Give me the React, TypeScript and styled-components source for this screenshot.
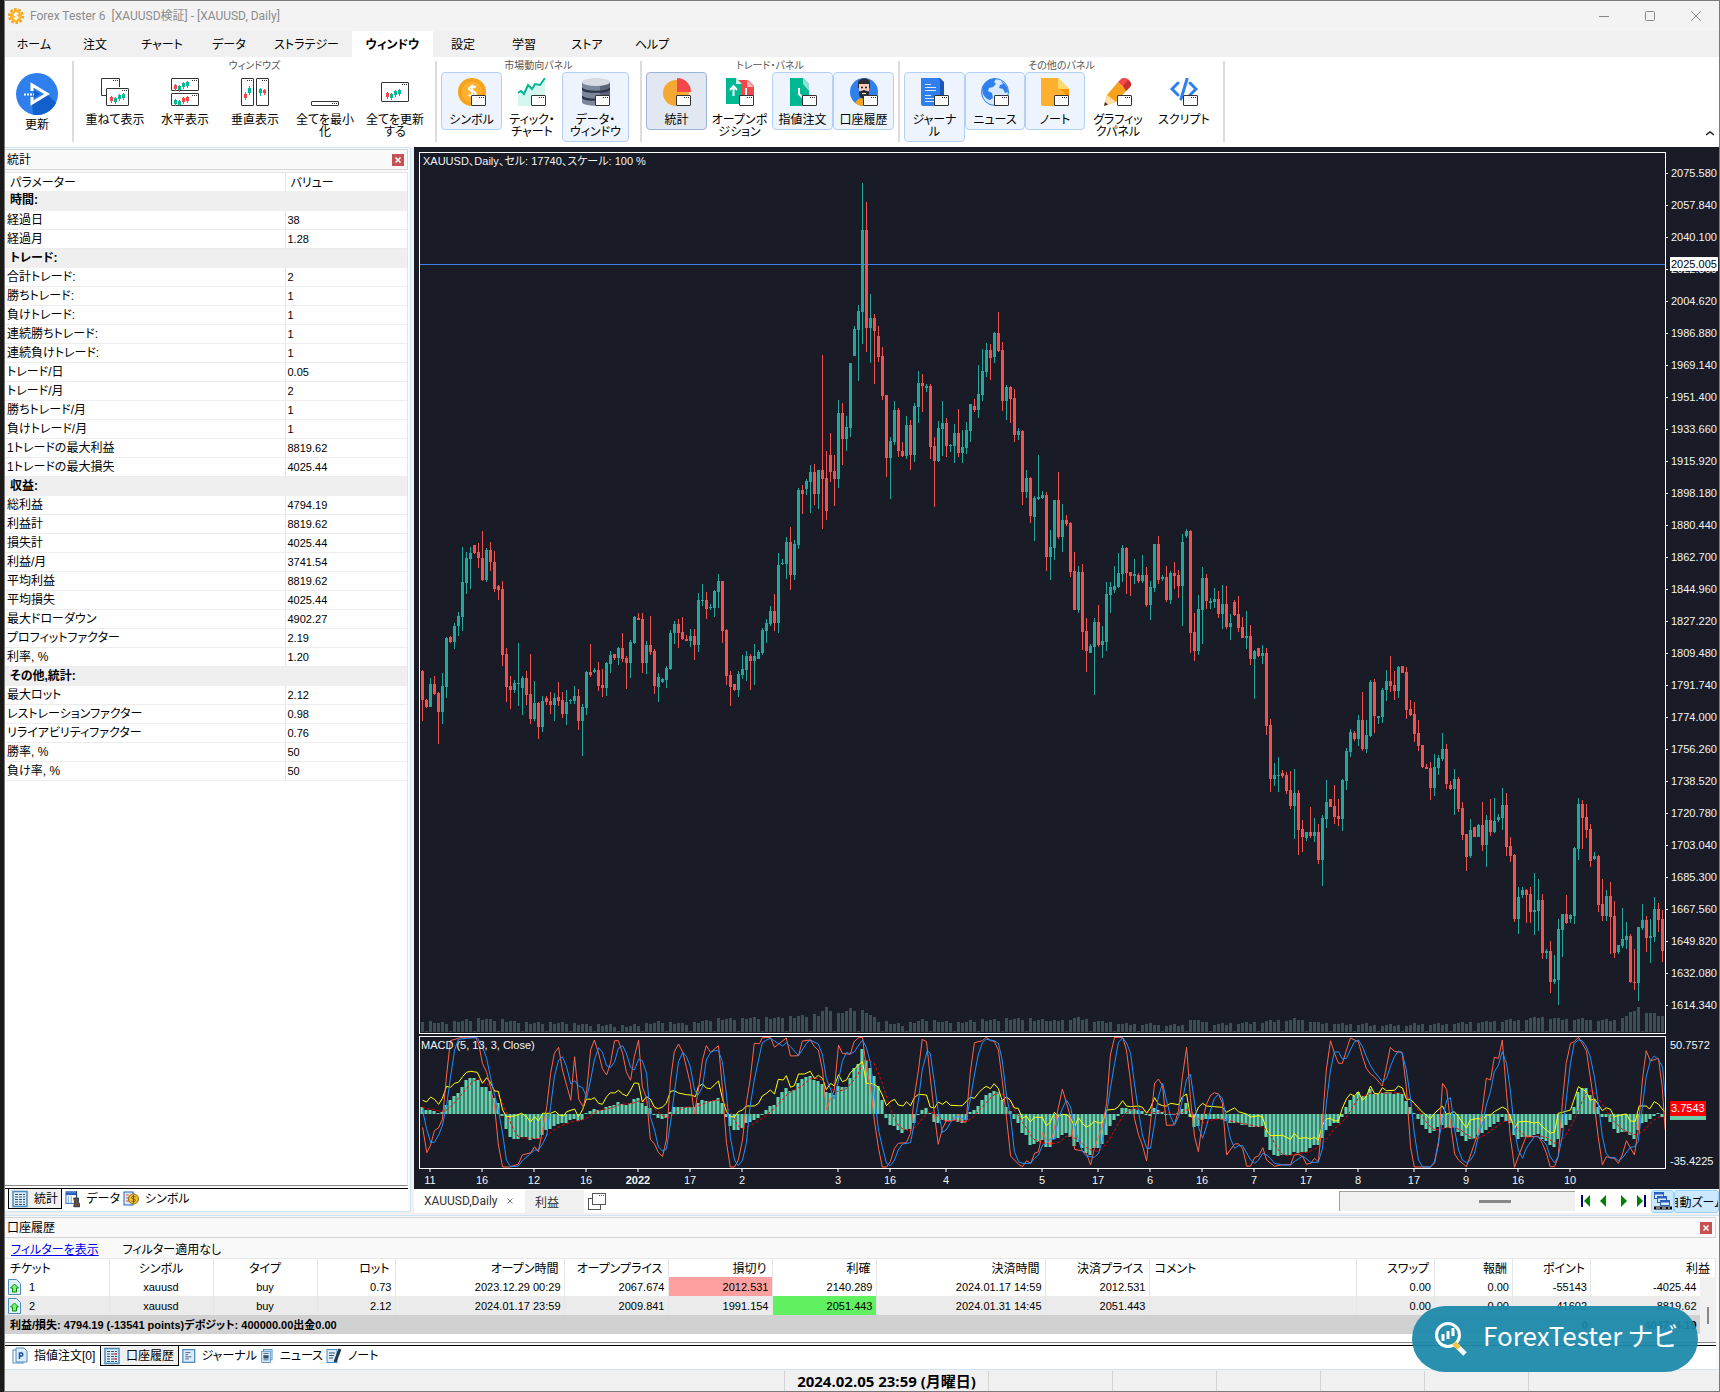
import React from "react";
import styled, { createGlobalStyle, css } from "styled-components";

const UI = `Roboto, "Noto Sans CJK JP", sans-serif`;
const GRID = `"Liberation Sans", "Noto Sans CJK JP", sans-serif`;

const GlobalStyle = createGlobalStyle`
  * { box-sizing: border-box; }
  body { margin: 0; background: #1c1a19; font-family: ${UI}; font-feature-settings: "palt"; font-size: 12px; color: #000; }
  button { font: inherit; font-feature-settings: inherit; color: inherit; background: none; border: 0; padding: 0; margin: 0; }
  svg { display: block; }
`;

/* ---------- market data ---------- */

/* direction, high, body top, body bottom, low: depth below the top of the pane */
const FIRST_HALF = `r1298,1301,1373,1423 r1370,1372,1389,1391 g1318,1333,1389,1389 r1313,1333,1357,1359 r1352,1355,1401,1480 g1306,1338,1401,1431 g1218,1220,1340,1367 r1215,1218,1230,1232 g1183,1191,1230,1246 g1156,1166,1191,1215
g997,1083,1168,1203 g1009,1024,1085,1112 g997,1012,1026,1100 r992,992,1012,1014 r987,1009,1024,1049 r958,1024,1078,1080 g1000,1004,1078,1083 r985,1004,1035,1056 r1007,1034,1100,1107 r1090,1093,1102,1127
r1080,1100,1262,1289 r1245,1259,1340,1377 r1313,1338,1347,1394 g1323,1330,1347,1355 g1232,1330,1333,1387 g1313,1318,1343,1409 r1301,1318,1360,1384 r1259,1357,1419,1431 g1325,1379,1419,1424 r1377,1379,1438,1468
g1362,1374,1438,1450 r1362,1367,1377,1384 r1352,1374,1384,1406 g1355,1367,1384,1423 r1328,1365,1374,1387 r1352,1372,1406,1416 g1347,1377,1406,1433 g1370,1372,1374,1382 g1338,1362,1374,1382 r1345,1362,1423,1445
g1382,1389,1423,1509 g1301,1303,1391,1409 r1235,1303,1311,1315 g1293,1298,1303,1306 r1279,1298,1338,1350 r1296,1335,1343,1365 g1279,1281,1343,1362 g1252,1262,1284,1306 r1259,1259,1269,1274 g1242,1245,1269,1286
r1208,1245,1272,1279 r1264,1269,1281,1345 g1225,1230,1281,1318 g1166,1169,1232,1235 r1159,1171,1175,1175 r1159,1174,1281,1306 g1227,1237,1281,1308 r1166,1237,1254,1262 r1247,1252,1338,1357 g1306,1315,1340,1377
g1318,1321,1328,1330 g1289,1293,1323,1343 g1200,1208,1296,1298 g1178,1186,1208,1235 r1173,1186,1208,1245 r1169,1205,1223,1225 r1213,1223,1227,1227 g1198,1215,1227,1242 r1198,1215,1237,1274 g1110,1127,1237,1254
g1088,1127,1130,1142 r1107,1127,1149,1174 g1137,1144,1147,1152 g1102,1105,1147,1169 g1063,1080,1107,1147 r1080,1080,1203,1232 r1198,1200,1313,1335 r1301,1311,1340,1387 r1333,1333,1347,1350 g1301,1308,1347,1365
g1262,1296,1311,1321 g1252,1264,1298,1325 r1259,1264,1276,1347 g1235,1264,1276,1335 g1249,1254,1272,1272 g1195,1200,1257,1262 g1174,1183,1203,1232 g1142,1154,1186,1191 r1112,1154,1183,1203 g1012,1041,1183,1208
g1026,1036,1039,1041 g972,985,1039,1076 r948,985,1066,1102 g980,990,1066,1078 g853,857,992,1002 r846,857,867,916 g831,835,855,870 g796,813,838,914 r794,813,867,894 g809,809,867,904
r527,809,831,953 r762,828,909,931 r718,772,813,838 r772,811,831,897 g637,669,831,853 r644,669,733,796 g676,703,733,762 g546,546,706,728 g456,463,529,529 g404,419,465,590
g105,220,421,500 r152,220,461,519 g377,436,461,546 r426,436,468,598 r456,480,532,544 r507,529,627,637 r625,625,779,826 g728,738,779,880 g640,661,740,747 r657,661,762,777
r740,762,774,777 g676,698,774,782 r686,698,772,808 g644,652,772,789 g566,595,654,693 r573,595,603,666 g598,603,608,617 r598,603,752,782 r728,750,786,899 g688,706,786,789
g640,693,708,774 r681,693,750,777 g745,747,750,764 g696,718,750,791 r659,718,767,777 g710,752,767,791 g691,710,755,769 g647,647,713,740 r635,652,661,666 g551,622,661,681
g512,566,625,640 g497,514,568,581 r500,514,534,588 g470,473,532,546 r421,473,517,519 r495,514,640,664 g600,605,640,686 r603,605,635,693 r610,632,723,740 g706,713,723,735
r711,713,862,894 g808,828,862,877 r826,828,921,938 g872,877,924,982 g772,875,880,882 g860,870,877,880 r862,870,1022,1056 g955,997,1022,1078 g882,882,1000,1029 r813,882,973,978`;

const SECOND_HALF = `g255,294,336,372 r282,294,304,309 r299,301,421,434 r372,419,514,514 g407,421,514,522 r402,421,568,612 r534,566,615,666 g598,603,620,620 g534,544,605,723 r502,544,600,605
g554,590,600,632 g446,475,593,615 g446,458,478,522 g407,456,466,473 g375,424,458,461 g355,363,426,446 r360,363,424,475 r421,421,431,480 g390,426,431,451 r424,429,443,448
g380,429,443,448 r409,429,502,507 g443,458,502,539 g353,353,461,470 r333,353,441,451 g429,434,438,443 r407,434,490,495 g419,424,490,500 r397,424,431,463 r416,429,456,485
g328,348,456,554 g316,321,333,338 r318,321,571,620 r522,568,615,639 g478,512,615,625 g409,436,514,598 r426,436,492,512 g485,492,497,512 g461,488,495,510 r468,488,524,534
g453,500,524,561 r456,500,556,561 g524,546,556,588 r490,495,527,529 r480,524,559,568 r532,556,583,583 g517,578,583,610 r551,578,635,649 g612,615,635,733 r608,608,627,630
g600,620,627,647 r608,620,799,821 r782,796,929,960 g889,919,929,946 g875,919,921,960 r907,914,921,926 r911,919,958,965 r909,955,995,1002 g904,963,995,1076 r955,963,1053,1115
r1029,1051,1071,1107 g1058,1058,1073,1080 r997,1058,1068,1073 g1024,1058,1068,1083 r1039,1058,1127,1137 g1017,1024,1127,1191 g931,985,1026,1049 r978,978,997,997 r943,995,1022,1039 r978,1019,1027,1044
g929,931,1027,1056 g853,860,933,955 g806,813,862,875 r811,816,831,835 g772,784,831,848 r715,784,855,860 g784,821,855,865 g686,691,823,826 r684,691,774,816 g774,774,779,794
g706,710,777,791 g661,688,710,738 r627,688,701,715 r664,698,713,735 g652,654,713,730 r652,652,669,669 r654,666,759,782 r735,757,772,774 r740,769,818,838 r784,816,848,860
r845,845,899,902 r892,899,904,904 r887,902,951,980 g867,899,951,970 g870,877,902,919 g816,855,880,885 r843,855,941,953 r933,943,953,955 g904,929,953,1017 r924,929,1002,1009
r985,1000,1066,1078 r1063,1063,1120,1154 g1027,1053,1117,1122 r1046,1046,1071,1071 g1039,1041,1071,1071 r985,1041,1090,1105 g1017,1029,1090,1144 r978,1029,1058,1068 g975,1031,1058,1061 g1014,1022,1029,1034
g951,992,1024,1053 r963,992,1095,1117 r1071,1093,1117,1132 r1112,1115,1272,1279 g1193,1218,1272,1308 g1193,1201,1213,1220 r1198,1200,1213,1281 r1193,1210,1254,1281 g1159,1249,1254,1311 g1174,1225,1252,1301
r1210,1225,1355,1370 g1345,1350,1355,1370 r1325,1350,1426,1453 g1360,1419,1426,1431 g1272,1296,1421,1482 g1259,1259,1298,1365 r1213,1259,1281,1284 g1259,1262,1272,1281 g1095,1098,1264,1284 g975,990,1100,1127
r980,990,1024,1100 r990,1022,1053,1073 r1039,1051,1129,1144 g1107,1117,1125,1127 r1115,1117,1237,1254 r1174,1235,1264,1276 g1200,1215,1264,1276 r1181,1215,1267,1357 r1227,1264,1355,1367 g1335,1335,1352,1357
g1245,1321,1338,1343 g1279,1313,1323,1345 r1308,1313,1426,1428 r1345,1426,1428,1445 g1291,1291,1428,1472 g1235,1274,1294,1298 r1264,1274,1318,1352 g1272,1313,1318,1379 g1218,1247,1316,1328 r1232,1247,1274,1303
r1249,1272,1350,1377`;

type Candle = { up: boolean; high: number; top: number; bottom: number; low: number };

function parseCandles(source: string, base: number): Candle[] {
  return source.split(/\s+/).map((item) => {
    const [high, top, bottom, low] = item
      .slice(1)
      .split(",")
      .map((v) => Math.round((Number(v) + base) / 2.45 - 13));
    return { up: item[0] === "g", high, top, bottom, low };
  });
}

const CANDLES = [...parseCandles(FIRST_HALF, 0), ...parseCandles(SECOND_HALF, 637)];

const MACD_LEVELS = `260 270 270 272 280 277 255 241 228 218 200 180 174 174 180 200 200 213 235 250 288 328 350 356 356 350 352 360 357 357 345 330 327 318 313 310 310 300 298 304 301 280 272 266 270 270 262 257 254 247 252 255 250 238 235 250 257 265 285 294 298 293 276 262 260 260 262 262 262 250 241 244 244 240 235 248 291 317 330 330 323 310 307 301 295 282 270 257 255 230 216 203 212 210 190 177 170 168 180 183 193 215 218 226 198 200 200 174 145 132 88 120 145 167 198 240 293 316 318 330 340 330 328 310 282 271 265 280 305 310 300 302 304 300 306 308 300 276 270 259 240 226 220 213 215 240 262 272 296 310 340 345 375 372 367 360 380 382 358 355
345 340 350 378 365 385 398 404 385 385 372 345 317 300 287 265 265 266 268 270 272 285 287 265 270 275 285 284 283 280 268 250 290 322 318 300 298 298 298 298 300 304 308 310 310 315 315 322 322 322 318 350 390 404 408 405 405 405 395 400 395 395 385 375 375 353 330 317 310 308 290 260 240 228 216 228 228 208 222 222 218 216 217 223 220 222 243 262 280 296 315 328 338 333 322 315 323 323 325 335 348 362 358 357 345 340 330 322 312 305 292 304 308 345 356 352 350 350 345 342 358 362 375 380 358 325 315 300 262 216 203 203 225 238 262 290 290 305 328 338 336 335 345 357 330 310 305 298 287 280 291`
  .split(/\s+/)
  .map((v) => Math.round(Number(v) / 3 - 17));

const ZERO = 77;

const STRENGTH_A = `30,241 39,246 49,231 58,238 68,253 77,235 87,199 96,202 106,190 115,187 125,170 134,157 144,154 160,157 172,190 182,173 191,187 201,213 210,214 220,270 229,290 248,288 265,280 277,290 286,306 296,290 305,303 315,280 334,280 345,274 355,285 365,288 372,275 391,267 400,290 410,269 419,237 431,238 438,233 448,250 457,253 467,230 476,218 486,219 495,211 505,222 515,228 524,210 533,189 543,190 552,246 562,230 571,237 581,262 590,266 600,261 609,250 619,214 628,212 638,219 657,224 668,225 678,230 685,200 695,192 704,204 714,206 723,195 733,183 742,235 752,275 761,290 771,291 780,275 790,270 799,258 818,258 828,250 837,228 847,220 856,210 866,222 875,178 887,180 894,167 904,202 913,197 923,162 937,162 951,154 961,176 970,166 980,175 989,209 999,190 1008,198 1018,164 1027,185 1037,180 1046,158 1056,147 1065,135 1075,125 1084,190 1094,190 1103,193 1113,202 1122,225 1132,257 1141,245 1151,238 1160,255 1172,258 1179,245 1189,257 1198,233 1208,223 1227,225 1236,261 1246,264 1255,246 1265,253 1274,244 1284,256 1303,257 1312,257 1331,232 1341,235 1350,220 1360,207 1369,199 1379,206 1388,191 1398,206 1407,242 1417,231 1426,240 1436,264 1445,265 1455,295 1464,288 1474,306 1483,292 1502,292 1512,317 1521,307 1531,277 1540,289`;
const STRENGTH_B = `6,283 16,284 25,293 35,320 44,293 54,311 63,321 73,315 82,303 92,309 101,308 111,270 130,268 139,260 149,242 158,258 168,260 187,258 196,262 206,280 215,264 225,233 234,252 244,257 253,258 263,250 282,254 291,230 301,222 310,290 320,291 329,262 339,250 348,258 367,260 386,262 396,277 405,270 415,264 424,275 443,282 453,291 472,287 481,290 491,330 500,347 529,346 548,358 557,340 567,355 586,353 595,357 605,352 614,360 624,315 633,297 643,295 652,303 662,302 671,265 681,236 690,222 700,228 709,215 719,240 728,230 738,198 747,220 757,222 766,203 776,212 795,211 804,198 814,204 823,238 833,238 842,250 861,276 871,286 880,296 890,280 909,258 918,282 928,280 937,275 947,290 956,307 966,324 975,300 994,295 1004,302 1013,285 1023,285 1032,275 1051,261 1061,268 1070,290 1080,325 1089,306 1108,304 1127,309 1137,306 1146,320 1156,330 1165,340 1175,336 1184,280 1194,277 1213,270 1222,237 1232,200 1251,215 1260,241 1270,236 1289,272 1298,263 1308,268 1317,290 1336,284 1346,282 1355,303 1367,304 1376,258 1393,258 1401,267 1412,245 1422,252 1436,275`;
const FAST_A = `30,322 40,398 49,375 58,332 68,323 77,298 87,165 96,62 115,55 125,52 156,52 163,70 172,130 182,157 191,200 201,260 210,375 220,441 236,441 257,433 267,405 287,398 296,380 305,395 315,330 325,260 334,160 343,100 353,82 362,150 382,241 391,110 401,238 412,262 420,210 429,90 438,60 448,100 457,146 467,165 476,130 486,62 495,62 505,100 514,155 524,181 533,110 543,60 552,200 562,235 571,358 581,372 590,397 600,410 609,360 619,180 628,95 638,72 648,97 657,143 666,190 676,282 685,210 695,120 704,77 714,97 733,77 742,200 752,370 761,441 771,441 780,420 790,360 799,250 808,180 818,70 830,71 837,53 856,52 866,82 894,54 904,108 923,107 932,63 951,60 961,80 970,90 980,150 989,268 1008,210 1018,75 1027,100 1046,103 1055,65 1066,53 1075,52 1084,145 1094,200 1103,300 1113,385 1122,441 1132,441 1141,425 1151,385 1160,370 1179,368 1189,340 1198,230 1208,150 1217,58 1227,65 1236,170 1246,285 1255,373 1265,325 1274,303 1293,300 1303,283 1312,305 1321,307 1331,160 1341,68 1360,62 1369,52 1379,62 1388,64 1398,90 1407,180 1417,290 1427,408 1436,420 1446,433 1455,440 1465,422 1475,430 1484,400 1493,395 1503,337 1512,360 1521,375 1531,325 1540,265`;
const FAST_B = `6,207 16,250 25,290 35,388 54,393 63,400 73,435 82,385 92,350 101,320 111,250 120,105 130,52 149,52 158,90 168,185 177,295 187,345 196,375 206,423 215,310 225,190 234,177 244,197 253,316 272,315 282,270 291,170 301,82 310,235 320,350 329,395 339,300 348,253 358,226 367,218 377,222 386,250 396,405 415,372 424,371 434,385 444,439 453,438 463,412 472,408 482,383 491,420 510,439 529,434 548,434 557,405 567,403 577,410 586,433 596,430 605,415 614,425 624,300 633,150 643,62 652,98 662,130 671,130 681,90 690,54 709,65 719,110 728,145 738,162 747,170 766,198 776,140 785,82 795,94 813,97 823,200 833,380 842,441 880,441 890,430 900,370 909,190 919,208 928,310 938,402 947,420 966,440 985,370 994,340 1004,265 1013,175 1023,180 1032,112 1042,115 1051,60 1061,220 1070,350 1080,442 1089,410 1108,348 1137,350 1146,370 1156,400 1165,440 1175,440 1184,410 1194,245 1203,130 1213,70 1222,65 1232,52 1241,70 1251,92 1260,170 1270,255 1279,350 1289,435 1298,410 1317,415 1327,430 1336,405 1346,362 1365,405 1374,330 1384,180 1393,92 1403,123 1422,115 1431,200 1438,330`;
const SLOW_A = `30,270 39,325 49,367 58,367 68,345 77,317 87,255 96,175 106,90 115,58 134,55 160,53 172,80 182,115 191,170 201,225 210,270 220,340 229,420 239,440 257,438 267,422 287,400 296,390 305,390 315,372 325,345 334,260 343,170 353,120 362,110 372,140 382,192 391,182 401,198 410,203 420,233 429,180 438,120 448,83 457,97 467,137 476,143 486,125 495,85 505,77 514,100 524,142 533,150 543,118 552,122 562,160 571,290 581,330 590,380 600,393 609,388 619,310 628,220 638,125 648,97 657,110 666,140 676,210 685,225 695,200 704,120 714,97 723,92 733,92 742,125 752,225 761,350 771,420 780,437 790,420 799,370 808,260 818,180 828,120 837,68 847,60 856,55 866,63 885,78 894,68 904,80 923,107 942,70 951,60 970,72 980,105 989,175 1008,237 1018,180 1027,125 1037,97 1046,102 1056,95 1066,75 1075,60 1084,82 1094,130 1103,225 1113,330 1122,380 1132,430 1141,437 1151,420 1160,390 1170,372 1189,368 1198,310 1208,240 1217,150 1229,92 1236,100 1246,190 1255,275 1265,337 1274,330 1284,308 1293,292 1303,290 1321,300 1331,240 1341,165 1350,105 1360,68 1369,58 1388,62 1398,70 1407,120 1417,225 1427,290 1436,395 1446,425 1455,430 1474,430 1484,415 1493,405 1503,375 1512,372 1521,357 1531,358 1540,300`;
const SLOW_B = `6,265 16,240 25,260 35,320 44,360 54,395 63,408 82,412 92,400 101,360 111,280 120,205 130,130 139,68 149,53 158,68 168,100 177,190 187,275 196,345 206,385 215,385 225,310 234,230 244,190 253,240 263,290 272,315 282,290 291,240 301,178 310,162 320,250 329,320 339,355 348,320 358,270 367,235 377,223 386,235 396,300 405,355 415,385 424,377 434,377 444,400 453,420 463,430 472,420 482,400 491,405 500,415 510,430 529,435 548,435 557,425 577,408 596,427 614,427 624,385 633,250 643,150 652,97 662,95 671,117 681,115 690,90 700,65 709,60 719,80 728,110 738,137 747,155 766,185 776,175 785,140 795,110 804,93 813,98 823,150 833,235 842,340 852,420 862,441 880,441 890,425 900,360 909,300 919,240 928,233 938,330 947,390 956,420 966,428 976,420 985,400 994,350 1004,310 1013,255 1023,215 1032,155 1042,135 1051,95 1061,130 1070,210 1080,330 1089,390 1099,415 1108,385 1127,350 1137,350 1146,360 1156,375 1165,410 1175,428 1184,410 1194,345 1203,240 1213,130 1222,70 1232,60 1241,62 1251,80 1260,110 1270,170 1279,250 1289,350 1298,400 1308,415 1317,412 1327,422 1336,415 1355,382 1365,380 1374,365 1384,260 1393,170 1403,122 1412,108 1422,118 1432,142 1438,230`;

function linePoints(first: string, second: string) {
  const part = (source: string, shift: number) =>
    source.split(" ").map((pair) => {
      const [x, y] = pair.split(",").map(Number);
      return `${((x + shift) / 2.3758 - 10).toFixed(1)},${(y / 3 - 17).toFixed(1)}`;
    });
  return [...part(first, 0), ...part(second, 1544)].join(" ");
}

const SIGNAL = MACD_LEVELS.map((_, i) => {
  const window = MACD_LEVELS.slice(Math.max(0, i - 3), i + 1);
  return `${2 + 4 * i},${(window.reduce((a, b) => a + b, 0) / window.length).toFixed(1)}`;
}).join(" ");

const VOLUME_KEYS: [number, number][] = [
  [0, 11], [5, 9], [14, 13], [19, 12], [25, 9], [35, 9], [42, 7], [52, 6], [60, 10], [66, 8], [74, 13], [88, 14],
  [95, 16], [99, 17], [101, 24], [104, 18], [107, 23], [111, 20], [114, 11], [120, 7], [125, 12], [134, 9], [140, 12],
  [150, 13], [158, 11], [164, 14], [168, 11], [176, 8], [190, 7], [192, 13], [198, 8], [206, 9], [212, 11], [219, 13],
  [224, 9], [240, 7], [256, 8], [264, 10], [273, 12], [280, 15], [285, 13], [298, 12], [301, 16], [304, 25], [306, 20], [310, 16],
];

const VOLUMES = CANDLES.map((_, i) => {
  if (i % 6 === (i < 156 ? 1 : 5)) return 1;
  const k = Math.max(0, VOLUME_KEYS.findIndex(([at]) => at >= i) - 1);
  const [x0, y0] = VOLUME_KEYS[k];
  const [x1, y1] = VOLUME_KEYS[k + 1];
  return Math.round(y0 + ((y1 - y0) * (i - x0)) / (x1 - x0) + ((i * 7) % 3) - 1);
});

const PRICES = Array.from({ length: 27 }, (_, i) => (2075.58 - 17.74 * i).toFixed(3));

const DATES: [number, string][] = [
  [430, "11"], [482, "16"], [534, "12"], [586, "16"], [638, "2022"], [690, "17"], [742, "2"], [838, "3"], [890, "16"],
  [946, "4"], [1042, "5"], [1098, "17"], [1150, "6"], [1202, "16"], [1254, "7"], [1306, "17"], [1358, "8"],
  [1414, "17"], [1466, "9"], [1518, "16"], [1570, "10"],
];

/* ---------- frame ---------- */

const Frame = styled.div`
  min-height: 100vh;
  display: flex;
  flex-direction: column;
  margin-left: 4px;
  border: 1px solid #7a7a7a;
  background: #f0f0f0;
  position: relative;
`;

const TitleBar = styled.header`
  height: 30px;
  display: flex;
  align-items: center;
  padding: 0 15px 0 3px;
  background: #f3f3f3;
  color: #8c8c8c;
  h1 { margin: 0 auto 0 6px; font-size: 12px; font-weight: 400; line-height: 18px; white-space: pre; }
`;

const WindowButtons = styled.div`
  display: flex;
  gap: 30px;
`;

const MenuTabs = styled.nav`
  height: 26px;
  display: flex;
  background: #f0f0f0;
`;

const MenuTab = styled.button<{ $w: number; $active?: boolean }>`
  width: ${(p) => p.$w}px;
  line-height: 26px;
  padding-top: 1px;
  white-space: nowrap;
  ${(p) => p.$active && css`background: #fff; font-weight: 700;`}
`;

const RibbonBar = styled.section`
  height: 90px;
  display: flex;
  background: #fff;
  padding-top: 4px;
`;

const Group = styled.div<{ $w: number }>`
  width: ${(p) => p.$w}px;
  height: 81px;
  border-right: 2px solid #dcdcdc;
  display: flex;
  flex-direction: column;
`;

const GroupTitle = styled.h2`
  margin: 0;
  height: 12px;
  line-height: 10px;
  font-size: 10px;
  font-weight: 400;
  color: #555;
  text-align: center;
`;

const GroupBody = styled.div<{ $pad: number }>`
  display: flex;
  align-items: flex-start;
  padding-left: ${(p) => p.$pad}px;
`;

const Tool = styled.button<{ $w: number; $tone?: "on" | "pressed" }>`
  width: ${(p) => p.$w}px;
  flex: none;
  display: flex;
  flex-direction: column;
  align-items: center;
  gap: 8px;
  padding: 5px 0 3px;
  border: 1px solid transparent;
  border-radius: 4px;
  line-height: 12px;
  text-align: center;
  white-space: pre;
  ${(p) => p.$tone === "on" && css`background: #edf4fd; border-color: #b3d1f8;`}
  ${(p) => p.$tone === "pressed" && css`background: #e1e8f1; border-color: #9db4d6;`}
`;

const Refresh = styled.button`
  width: 69px;
  padding: 12px 5px 0 0;
  display: flex;
  flex-direction: column;
  align-items: center;
  line-height: 20px;
`;

const Collapse = styled.button`
  margin: auto 5px 11px auto;
`;

const Middle = styled.div`
  flex: 1;
  display: flex;
  min-height: 400px;
`;

/* ---------- statistics dock ---------- */

const Dock = styled.aside`
  width: 406px;
  display: flex;
  flex-direction: column;
  border: 1px solid #cce6f8;
  border-left: 0;
  border-radius: 0 3px 3px 0;
  background: #f9f9f9;
  margin-bottom: 4px;
  padding: 1px 2px 0 0;
`;

const DockTitle = styled.div`
  height: 21px;
  display: flex;
  align-items: center;
  justify-content: space-between;
  padding: 0 3px 0 2px;
  border: 1px solid #d4d4d4;
  border-left: 0;
  background: #f9f9f9;
  font-family: ${GRID};
  h2 { margin: 0; font-size: 12px; font-weight: 400; line-height: 18px; }
`;

const CloseBox = styled.button`
  width: 12px;
  height: 12px;
  background: #c75050;
  display: grid;
  place-items: center;
`;

const StatsArea = styled.div`
  flex: 1;
  margin-top: 2px;
  background: #fff;
  border: 1px solid #e4e4e4;
  border-left: 0;
  border-bottom-color: #888;
`;

const StatsTable = styled.table`
  width: 100%;
  table-layout: fixed;
  border-collapse: collapse;
  font-family: ${GRID};
  font-size: 12px;
  th, td { height: 19px; padding: 0 2px; text-align: left; font-weight: 400; line-height: 18px; border-bottom: 1px solid #ececec; white-space: nowrap; }
  thead th { height: 18px; padding: 3px 5px 0; line-height: 15px; border-bottom: 0; }
  td, thead th + th { border-left: 1px solid #e4e4e4; }
  td { font-size: 11px; }
  col:last-child { width: 122px; }
`;

const SectionRow = styled.tr`
  && th { font-weight: 700; background: #efefef; padding: 0 5px; border-color: #efefef; }
`;

const DockTabs = styled.div<{ $h: number; $indent: number }>`
  height: ${(p) => p.$h}px;
  display: flex;
  background: #fff;
  margin-top: 2px;
  padding-left: ${(p) => p.$indent}px;
  border-top: 1px solid #000;
  font-family: ${GRID};
`;

const DockTab = styled.button<{ $w: number; $active?: boolean }>`
  width: ${(p) => p.$w}px;
  height: 20px;
  display: flex;
  align-items: center;
  gap: 6px;
  padding-left: 3px;
  line-height: 18px;
  white-space: nowrap;
  ${(p) => p.$active && css`background: #f0f0f0; border: 1px solid #000; border-top: 0;`}
`;

/* ---------- chart ---------- */

const ChartColumn = styled.main`
  flex: 1;
  min-width: 0;
  margin: 0 0 3px 3px;
  display: flex;
  flex-direction: column;
`;

const ChartGrid = styled.div`
  flex: 1;
  display: grid;
  grid-template-columns: minmax(0, 1fr) 53px;
  grid-template-rows: minmax(0, 1fr) 133px 18px;
  row-gap: 2px;
  padding: 5px 0 0 5px;
  background: #191c27;
  color: #f4f4f4;
  font-family: ${GRID};
  font-size: 11px;
`;

const Pane = styled.div`
  position: relative;
  border: 1px solid #fff;
  min-height: 0;
`;

const Plot = styled.svg`
  position: absolute;
  inset: 0;
  width: 100%;
  height: 100%;
`;

const PaneCaption = styled.div<{ $x: number }>`
  position: absolute;
  left: ${(p) => p.$x}px;
  top: 1px;
  line-height: 14px;
`;

const PriceAxis = styled.ol`
  position: relative;
  list-style: none;
  margin: 0;
  padding: 5px 0 0;
  min-height: 0;
  height: 0;
  li { height: 32px; line-height: 32px; display: flex; align-items: center; gap: 3px; }
  li::before { content: ""; width: 2px; height: 1px; background: #fff; }
`;

const AxisBadge = styled.span<{ $top: number; $tone: "price" | "macd" }>`
  position: absolute;
  left: 4px;
  top: ${(p) => p.$top}px;
  padding: 0 1px;
  line-height: 14px;
  ${(p) =>
    p.$tone === "price"
      ? css`background: #fff; color: #000;`
      : css`background: #f00; color: #fff; border-bottom: 4px solid #6bcfae; line-height: 15px;`}
`;

const MacdAxis = styled.div`
  position: relative;
  display: flex;
  flex-direction: column;
  justify-content: space-between;
  padding: 2px 0 1px 4px;
  line-height: 14px;
`;

const TimeAxis = styled.svg`
  width: 100%;
  height: 18px;
  overflow: visible;
`;

const ChartFooter = styled.div`
  height: 24px;
  display: flex;
  align-items: center;
  background: #fff;
  font-size: 12px;
`;

const ChartTab = styled.button<{ $w: number; $idle?: boolean }>`
  width: ${(p) => p.$w}px;
  height: 23px;
  display: flex;
  align-items: center;
  gap: 9px;
  padding-left: 10px;
  color: #333;
  ${(p) => p.$idle && css`background: #f0f0f0;`}
`;

const CascadeButton = styled.button`
  margin: 0 auto 0 4px;
`;

const ScrollTrack = styled.div`
  width: 236px;
  height: 20px;
  border: 1px solid #a0a0a0;
  border-width: 1px 0 0 1px;
  background: #f0f0f0;
  padding: 8px 0 0 139px;
  i { display: block; width: 32px; height: 3px; background: #888; }
`;

const NavButtons = styled.div`
  display: flex;
  gap: 9px;
  padding: 0 5px 0 6px;
`;

const Toggle = styled.button<{ $w: number }>`
  width: ${(p) => p.$w}px;
  height: 23px;
  overflow: hidden;
  display: flex;
  justify-content: center;
  align-items: center;
  white-space: nowrap;
  background: #cce8ff;
  border: 1px solid #99d1ff;
  border-radius: 3px;
  font-family: ${GRID};
`;

/* ---------- account history ---------- */

const Account = styled.section`
  border-top: 1px solid #cce6f8;
  border-bottom: 1px solid #cce6f8;
  margin: -1px 0 0;
  background: #f9f9f9;
  padding: 1px 3px 0 0;
`;

const FilterRow = styled.div`
  height: 20px;
  display: flex;
  align-items: center;
  gap: 24px;
  padding-left: 6px;
  font-family: ${GRID};
  font-size: 12px;
  a { color: #0000f0; }
`;

const HistoryArea = styled.div`
  position: relative;
  height: 85px;
  background: #fff;
  border-top: 1px solid #e8e8e8;
  border-bottom: 1px solid #888;
`;

const HistoryTable = styled.table`
  width: 100%;
  table-layout: fixed;
  border-collapse: collapse;
  font-family: ${GRID};
  font-size: 11px;
  th, td { height: 19px; padding: 0 3px; border-right: 1px solid #e6e6e6; white-space: nowrap; line-height: 18px; }
  th { height: 18px; font-size: 12px; font-weight: 400; padding: 3px 5px 0; line-height: 15px; }
  td:last-child { padding-right: 19px; border: 0; }
  tbody tr:nth-child(2) { background: #ebebeb; }
  tfoot td { height: 19px; background: #d1d1d1; font-weight: 700; border: 0; padding-left: 5px; }
`;

const Cell = styled.td<{ $align: "left" | "center" | "right"; $fill?: string }>`
  text-align: ${(p) => p.$align};
  background: ${(p) => p.$fill ?? "transparent"};
`;

const HeadCell = styled.th<{ $align: "left" | "center" | "right" }>`
  text-align: ${(p) => p.$align};
`;

const Ticket = styled.span`
  display: flex;
  align-items: center;
  gap: 8px;
`;

const HistoryScroll = styled.div`
  position: absolute;
  right: 0;
  top: 18px;
  bottom: 0;
  width: 16px;
  background: #f0f0f0;
  i { position: absolute; left: 7px; top: 30px; width: 2px; height: 17px; background: #888; }
`;

const StatusBar = styled.footer`
  height: 20px;
  display: flex;
  margin-top: 1px;
  padding-left: 779px;
  background: #f0f0f0;
`;

const StatusCell = styled.div<{ $w: number }>`
  width: ${(p) => p.$w}px;
  border-left: 1px solid #d4d4d4;
  text-align: center;
  font-family: "Open Sans", "Noto Sans CJK JP", sans-serif;
  font-feature-settings: normal;
  font-size: 15px;
  font-weight: 700;
  line-height: 20px;
  white-space: nowrap;
`;

const NaviPill = styled.button`
  position: absolute;
  right: 21px;
  bottom: 19px;
  width: 286px;
  height: 66px;
  border-radius: 33px;
  background: rgba(28, 137, 170, 0.94);
  color: #fff;
  display: flex;
  align-items: center;
  gap: 16px;
  padding-left: 23px;
  font-family: "Noto Sans CJK JP", sans-serif;
  font-size: 26px;
  line-height: 26px;
  white-space: nowrap;
  span { padding-bottom: 8px; }
`;

/* ---------- icons ---------- */

const MiniWindow = ({ x, y, w = 15, h = 11 }: { x: number; y: number; w?: number; h?: number }) => (
  <g>
    <rect x={x + 0.5} y={y + 0.5} width={w - 1} height={h - 1} rx="0.5" fill="#fff" stroke="#333" />
    <path d={`M${x + w - 7} ${y + 2.5}h1m1 0h1m1 0h1`} stroke="#333" />
  </g>
);

const Sticks = ({ x, y, colors = "rggg" }: { x: number; y: number; colors?: string }) => (
  <g shapeRendering="crispEdges">
    {[...colors].map((c, i) => {
      const up = [3, 4, 1, 0][i];
      return (
        <g key={i} fill={c === "r" ? "#f44" : "#00b894"}>
          <rect x={x + i * 4} y={y + up} width="3" height="4" />
          <rect x={x + 1 + i * 4} y={y + up - 1} width="1" height="7" />
        </g>
      );
    })}
  </g>
);

const badge = <MiniWindow x={13} y={17} />;

const ICONS: Record<string, React.ReactNode> = {
  cascade: (
    <>
      <path d="M5 17.500H.5V.5h18V9" fill="#fff" stroke="#333" />
      <path d="M12 2.500h1m1 0h1m1 0h1" stroke="#333" />
      <MiniWindow x={5} y={10} w={23} h={18} />
      <Sticks x={9} y={16} />
    </>
  ),
  horizontal: (
    <>
      <MiniWindow x={0} y={0} w={28} h={13} />
      <MiniWindow x={0} y={15} w={28} h={13} />
      <Sticks x={3} y={4} />
      <Sticks x={3} y={19} colors="ggrr" />
    </>
  ),
  vertical: (
    <>
      <MiniWindow x={0} y={0} w={13} h={28} />
      <MiniWindow x={15} y={0} w={13} h={28} />
      <path d="M4.500 14v8M23.500 11v6" stroke="#f44" />
      <path d="M3 16h3v4H3zM22 12h3v3h-3z" fill="#f44" />
      <path d="M8.500 8v9M19.500 10v8" stroke="#00b894" />
      <path d="M7 10h3v5H7zM18 11h3v4h-3z" fill="#00b894" />
    </>
  ),
  minimize: <MiniWindow x={0} y={23} w={28} h={5} />,
  restore: (
    <>
      <MiniWindow x={0} y={4} w={28} h={20} />
      <Sticks x={5} y={12} />
    </>
  ),
  coin: (
    <>
      <circle cx="14" cy="14" r="14" fill="#f7a21b" />
      <circle cx="14" cy="14" r="10.500" fill="#ffb02e" />
      <path d="M17.500 9.500c-1-1.200-6.500-1.500-6.500 1.300 0 3 6.700 1.700 6.700 4.800 0 3-5.700 2.700-7 1M14.200 6.500v13" fill="none" stroke="#fff" strokeWidth="2" />
      {badge}
    </>
  ),
  tick: (
    <>
      <path d="M0 28V17l3-2 3 2 4-9 4 4 3-5 5 1 5-8v28z" fill="#d3f7ef" />
      <path d="M0 15l3-2 3 3 4-9 4 4 3-5 5 1 5-7" fill="none" stroke="#00b894" strokeWidth="2" />
      {badge}
    </>
  ),
  database: (
    <>
      <path d="M0 4v20c0 5 28 5 28 0V4z" fill="#7d879b" />
      <path d="M18 2v25c6 0 10-1 10-3V4z" fill="#5b6478" />
      <ellipse cx="14" cy="4" rx="14" ry="4" fill="#d5dae3" />
      <path d="M0 10c0 5 28 5 28 0M0 18c0 5 28 5 28 0" fill="none" stroke="#2d3446" strokeWidth="2" />
      {badge}
    </>
  ),
  pie: (
    <>
      <circle cx="13" cy="15" r="13" fill="#f5a932" />
      <path d="M14 0a14 14 0 0 1 14 14H14z" fill="#f5484a" />
      {badge}
    </>
  ),
  positions: (
    <>
      <path d="M10 2h12l6 6v18H10z" fill="#f5484a" />
      <path d="M21 2l7 7h-7z" fill="#ffb3b3" />
      <path d="M20 10v8" stroke="#fff" strokeWidth="2" />
      <path d="M0 0h10l6 6v20H0z" fill="#00b894" />
      <path d="M10 0l6 6h-6z" fill="#c4f4e8" />
      <path d="M7.500 18V9M4 12l3.500-4L11 12" fill="none" stroke="#fff" strokeWidth="2" />
      {badge}
    </>
  ),
  pending: (
    <>
      <path d="M1 0h13l6 6v22H1z" fill="#00b894" />
      <path d="M14 0l6 6v7l-6-7z" fill="#8de3cf" />
      <path d="M10 10v6l4 4" fill="none" stroke="#fff" strokeWidth="2" />
      {badge}
    </>
  ),
  person: (
    <>
      <circle cx="14" cy="14" r="14" fill="#2f80ed" />
      <path d="M5 25c2-4 5-5 9-5s7 1 9 5c-5 4-13 4-18 0z" fill="#f7a21b" />
      <path d="M8 4c3-5 10-5 12 0v6H8z" fill="#2c2c34" />
      <path d="M9 6h10v9c0 5-10 5-10 0z" fill="#ffc9b8" />
      <path d="M9 13c2 1 3-1 5-1s3 2 5 1v3c0 6-10 6-10 0z" fill="#2c2c34" />
      <path d="M11 9.500h2m2 0h2" stroke="#222" strokeWidth="1.500" />
      <path d="M12 15.500h4" stroke="#fff" />
      {badge}
    </>
  ),
  journal: (
    <>
      <path d="M3 0h16l4 4v24H3z" fill="#1b57b8" />
      <path d="M0 0h17c1 0 2 1 2 2v26H2c-1 0-2-1-2-2z" fill="#2f80ed" />
      <path d="M4 6.500h6M4 9.500h11M4 12.500h11M4 17.500h6M4 20.500h9M4 23.500h9" stroke="#d8e8ff" />
      {badge}
    </>
  ),
  globe: (
    <>
      <circle cx="14" cy="14" r="14" fill="#d8e8ff" />
      <path d="M4 5C7 1 12 0 15 1l-2 3 2 2-3 3-4 1-1 3 4 2 1 5-3 2C3 21-2 12 4 5zM20 3c5 3 7 7 7 11l-3 1-2-4-4-1 1-3 3-1z" fill="#2f80ed" />
      <circle cx="14" cy="14" r="13.500" fill="none" stroke="#2f80ed" />
      {badge}
    </>
  ),
  note: (
    <>
      <path d="M0 0h17l11 11v17H2c-1 0-2-1-2-2z" fill="#ffb02e" />
      <path d="M17 0l11 11H19c-1 0-2-1-2-2z" fill="#ffd96b" />
      <path d="M19 11h9v8z" fill="#f79400" />
      {badge}
    </>
  ),
  pencil: (
    <>
      <path d="M0 28l3-11L14 4l9 8-11 12z" fill="#f7a21b" />
      <path d="M14 4l3-3c2-2 6-1 8 1s3 5 1 7l-3 3z" fill="#f5484a" />
      <path d="M19 8l5-6c3 2 4 5 2 7l-4 4z" fill="#c9302c" />
      <path d="M0 28l3-11 9 7z" fill="#ffe2a8" />
      <path d="M0 28l1-4 3 2.500z" fill="#333" />
      {badge}
    </>
  ),
  script: (
    <>
      <path d="M8 5L2 11l6 6M20 5l6 6-6 6M17 1l-6 20" fill="none" stroke="#2f80ed" strokeWidth="3" strokeLinecap="round" />
      {badge}
    </>
  ),
};

const Icon = ({ name }: { name: string }) => (
  <svg width="28" height="28" viewBox="0 0 28 28" aria-hidden="true">
    {ICONS[name]}
  </svg>
);

const Sheet = ({ children }: { children?: React.ReactNode }) => (
  <svg width="16" height="18" viewBox="0 0 16 18" aria-hidden="true">
    {children}
  </svg>
);

const ListIcon = ({ red }: { red?: boolean }) => (
  <Sheet>
    <rect x="1" y="1.500" width="14" height="15" fill="#dcecf8" stroke="#4a8cc4" strokeWidth="1.500" />
    <path d="M3 4.500h10M3 7h10M3 9.500h10M3 12h10M3 14.500h10" stroke="#34506c" strokeDasharray="3 1" />
    {red && <path d="M10 7h3M10 12h3" stroke="#e02020" />}
  </Sheet>
);

const dockIcons: Record<string, React.ReactNode> = {
  list: <ListIcon />,
  history: <ListIcon red />,
  data: (
    <Sheet>
      <rect x="1" y="1.500" width="11" height="12" fill="#fff" stroke="#2a5fc0" />
      <path d="M1 3.500h11" stroke="#2a5fc0" strokeWidth="3" />
      <path d="M3.500 6v7M6.500 6v7" stroke="#7aa4e0" />
      <path d="M12 1v7M9 8h5v4l2 5H9l1-4z" fill="#6b4a36" stroke="#2b3a4a" />
    </Sheet>
  ),
  symbol: (
    <Sheet>
      <rect x="1" y="2" width="9" height="13" fill="#dcecf8" stroke="#2a5fc0" />
      <path d="M3 5h3M3 8h3M3 11h3" stroke="#e05030" />
      <circle cx="10.500" cy="9" r="5" fill="#f2c230" stroke="#8a6a10" />
      <path d="M12.500 7c-1-1-4-.8-4 .7 0 1.700 4 .9 4 2.600 0 1.500-3 1.700-4 .7M10.500 5v8" fill="none" stroke="#7a5400" />
    </Sheet>
  ),
  pending: (
    <Sheet>
      <rect x="1" y="3" width="10" height="13" fill="#fff" stroke="#4a8cc4" />
      <path d="M4 1h8l3 3v11H4z" fill="#dcecf8" stroke="#4a8cc4" />
      <path d="M7.500 12V6h2.500q1.500 1.500 0 3H7.500" fill="none" stroke="#1c4f9c" strokeWidth="1.500" />
    </Sheet>
  ),
  journal: (
    <Sheet>
      <rect x="1" y="1.500" width="14" height="15" fill="#dcecf8" stroke="#4a8cc4" strokeWidth="1.500" />
      <path d="M4 5h6M4 7.500h3M4 10h7M4 12.500h4" stroke="#34506c" />
    </Sheet>
  ),
  news: (
    <Sheet>
      <rect x="4" y="1.500" width="10" height="12" fill="#dcecf8" stroke="#4a8cc4" />
      <rect x="2" y="3.500" width="10" height="13" fill="#dcecf8" stroke="#4a8cc4" />
      <path d="M4 6h6M4 8.500h6M4 13.500h6" stroke="#34506c" />
      <rect x="4" y="9" width="6" height="3" fill="#34506c" />
    </Sheet>
  ),
  note: (
    <Sheet>
      <rect x="1" y="2.500" width="10" height="13" fill="#dcecf8" stroke="#4a8cc4" />
      <path d="M3 6h6M3 8.500h5M3 11h4" stroke="#34506c" />
      <path d="M14 2L9 15" stroke="#24364c" strokeWidth="3" />
    </Sheet>
  ),
};

const CloseIcon = () => (
  <svg width="6" height="6" viewBox="0 0 6 6" aria-hidden="true">
    <path d="M.5.5l5 5m0-5l-5 5" stroke="#fff" strokeWidth="1.500" />
  </svg>
);

const TicketIcon = () => (
  <svg width="13" height="16" viewBox="0 0 13 16" aria-hidden="true">
    <path d="M.5.5h8l4 4v11H.5z" fill="#e3f0fa" stroke="#4a8cc4" />
    <path d="M6.500 5l4 4h-2v4h-4V9h-2z" fill="#7df07d" stroke="#0a8a0a" />
  </svg>
);

/* ---------- content ---------- */

const TABS: [string, number][] = [
  ["ホーム", 58], ["注文", 64], ["チャート", 70], ["データ", 64], ["ストラテジー", 91], ["ウィンドウ", 81],
  ["設定", 60], ["学習", 62], ["ストア", 64], ["ヘルプ", 66],
];

type ToolDef = { icon: string; label: string; w: number; tone?: "on" | "pressed" };

const GROUPS: { title: string; w: number; pad: number; tools: ToolDef[] }[] = [
  {
    title: "ウィンドウズ", w: 363, pad: 6,
    tools: [
      { icon: "cascade", label: "重ねて表示", w: 70 },
      { icon: "horizontal", label: "水平表示", w: 70 },
      { icon: "vertical", label: "垂直表示", w: 70 },
      { icon: "minimize", label: "全てを最小\n化", w: 70 },
      { icon: "restore", label: "全てを更新\nする", w: 70 },
    ],
  },
  {
    title: "市場動向パネル", w: 205, pad: 4,
    tools: [
      { icon: "coin", label: "シンボル", w: 61, tone: "on" },
      { icon: "tick", label: "ティック・\nチャート", w: 60 },
      { icon: "database", label: "データ・\nウィンドウ", w: 67, tone: "on" },
    ],
  },
  {
    title: "トレード・パネル", w: 258, pad: 4,
    tools: [
      { icon: "pie", label: "統計", w: 61, tone: "pressed" },
      { icon: "positions", label: "オープンポ\nジション", w: 65 },
      { icon: "pending", label: "指値注文", w: 61, tone: "on" },
      { icon: "person", label: "口座履歴", w: 61, tone: "on" },
    ],
  },
  {
    title: "その他のパネル", w: 325, pad: 4,
    tools: [
      { icon: "journal", label: "ジャーナ\nル", w: 61, tone: "on" },
      { icon: "globe", label: "ニュース", w: 60, tone: "on" },
      { icon: "note", label: "ノート", w: 60, tone: "on" },
      { icon: "pencil", label: "グラフィッ\nクパネル", w: 66 },
      { icon: "script", label: "スクリプト", w: 66 },
    ],
  },
];

const STATS: [string, string?][] = [
  ["時間:"], ["経過日", "38"], ["経過月", "1.28"],
  ["トレード:"], ["合計トレード:", "2"], ["勝ちトレード:", "1"], ["負けトレード:", "1"], ["連続勝ちトレード:", "1"],
  ["連続負けトレード:", "1"], ["トレード/日", "0.05"], ["トレード/月", "2"], ["勝ちトレード/月", "1"], ["負けトレード/月", "1"],
  ["1トレードの最大利益", "8819.62"], ["1トレードの最大損失", "4025.44"],
  ["収益:"], ["総利益", "4794.19"], ["利益計", "8819.62"], ["損失計", "4025.44"], ["利益/月", "3741.54"],
  ["平均利益", "8819.62"], ["平均損失", "4025.44"], ["最大ドローダウン", "4902.27"], ["プロフィットファクター", "2.19"], ["利率, %", "1.20"],
  ["その他,統計:"], ["最大ロット", "2.12"], ["レストレーションファクター", "0.98"], ["リライアビリティファクター", "0.76"],
  ["勝率, %", "50"], ["負け率, %", "50"],
];

type Align = "left" | "center" | "right";

const COLUMNS: { name: string; w?: number; align: Align }[] = [
  { name: "チケット", w: 104, align: "left" },
  { name: "シンボル", w: 104, align: "center" },
  { name: "タイプ", w: 104, align: "center" },
  { name: "ロット", w: 78, align: "right" },
  { name: "オープン時間", w: 169, align: "right" },
  { name: "オープンプライス", w: 104, align: "right" },
  { name: "損切り", w: 104, align: "right" },
  { name: "利確", w: 104, align: "right" },
  { name: "決済時間", w: 169, align: "right" },
  { name: "決済プライス", w: 104, align: "right" },
  { name: "コメント", align: "left" },
  { name: "スワップ", w: 78, align: "right" },
  { name: "報酬", w: 78, align: "right" },
  { name: "ポイント", w: 78, align: "right" },
  { name: "利益", w: 125, align: "right" },
];

const TRADES: { cells: string[]; hit: number; fill: string }[] = [
  {
    cells: ["1", "xauusd", "buy", "0.73", "2023.12.29 00:29", "2067.674", "2012.531", "2140.289", "2024.01.17 14:59", "2012.531", "", "0.00", "0.00", "-55143", "-4025.44"],
    hit: 6, fill: "#ffa0a0",
  },
  {
    cells: ["2", "xauusd", "buy", "2.12", "2024.01.17 23:59", "2009.841", "1991.154", "2051.443", "2024.01.31 14:45", "2051.443", "", "0.00", "0.00", "41602", "8819.62"],
    hit: 7, fill: "#60f060",
  },
];

function PricePlot() {
  return (
    <Plot viewBox="0 0 1245 880" preserveAspectRatio="none" shapeRendering="crispEdges">
      {VOLUMES.map((v, i) => (
        <rect key={i} x={1 + 4 * i} y={879 - v} width="3" height={v} fill="#3a4f56" />
      ))}
      <rect x="0" y="111" width="1245" height="1" fill="#4080e8" />
      {CANDLES.map((c, i) => (
        <g key={i} fill={c.up ? "#26a69a" : "#ef5350"}>
          <rect x={2 + 4 * i} y={c.high} width="1" height={Math.max(1, c.low - c.high)} />
          <rect x={1 + 4 * i} y={c.top} width="3" height={Math.max(1, c.bottom - c.top)} />
        </g>
      ))}
    </Plot>
  );
}

function MacdPlot() {
  return (
    <Plot viewBox="0 0 1245 131" preserveAspectRatio="none">
      <g shapeRendering="crispEdges">
        {MACD_LEVELS.map((y, i) => {
          const top = Math.min(y, ZERO);
          const height = Math.max(1, Math.abs(y - ZERO));
          return (
            <g key={i}>
              <rect x={4 * i} y={top} width="4" height={height} fill="#3f8574" />
              <rect x={1 + 4 * i} y={top} width="2" height={height} fill="#6bcfae" />
            </g>
          );
        })}
      </g>
      <g fill="none" strokeWidth="1">
        <polyline points={SIGNAL} stroke="#f00000" strokeDasharray="3 2" />
        <polyline points={linePoints(STRENGTH_A, STRENGTH_B)} stroke="#ffff00" />
        <polyline points={linePoints(FAST_A, FAST_B)} stroke="#ff6347" />
        <polyline points={linePoints(SLOW_A, SLOW_B)} stroke="#1e90ff" />
      </g>
    </Plot>
  );
}

export default function App() {
  return (
    <>
      <GlobalStyle />
      <Frame>
        <TitleBar>
          <svg width="16" height="16" viewBox="0 0 16 16" aria-hidden="true">
            <circle cx="8" cy="8" r="6.500" fill="none" stroke="#f7a21b" strokeWidth="3" strokeDasharray="2.500 1.500" />
            <circle cx="8" cy="8" r="6" fill="#ffb52e" />
            <path d="M10 6c-1-1-3.800-.8-3.800.7 0 1.600 3.800.9 3.800 2.500S7 10.800 6 10M8 4v8" fill="none" stroke="#fff" strokeWidth="1.300" />
          </svg>
          <h1>{"Forex Tester 6  [XAUUSD検証] - [XAUUSD, Daily]"}</h1>
          <WindowButtons>
            <button aria-label="最小化">
              <svg width="16" height="16" viewBox="0 0 16 16"><path d="M3 8.500h10" stroke="#888" /></svg>
            </button>
            <button aria-label="最大化">
              <svg width="16" height="16" viewBox="0 0 16 16"><rect x="3.500" y="3.500" width="9" height="9" rx="1" fill="none" stroke="#888" /></svg>
            </button>
            <button aria-label="閉じる">
              <svg width="16" height="16" viewBox="0 0 16 16"><path d="M3 3l10 10M13 3L3 13" stroke="#888" /></svg>
            </button>
          </WindowButtons>
        </TitleBar>

        <MenuTabs>
          {TABS.map(([name, w]) => (
            <MenuTab key={name} $w={w} $active={name === "ウィンドウ"}>{name}</MenuTab>
          ))}
        </MenuTabs>

        <RibbonBar>
          <Group $w={69}>
            <Refresh>
              <svg width="42" height="42" viewBox="0 0 42 42" aria-hidden="true">
                <circle cx="21" cy="21" r="21" fill="#2f80ed" />
                <path d="M31 21l9 9c-4 8-12 12-19 12-2 0-3 0-4-1l-1-10z" fill="#1160cc" />
                <path d="M16 18v-6l15 9-15 9v-6" fill="#2f80ed" stroke="#fff" strokeWidth="3" />
                <path d="M8 21.500h10" stroke="#fff" strokeWidth="2" strokeDasharray="2 1" />
                <path d="M18 17l6 4-6 4z" fill="#1160cc" />
              </svg>
              更新
            </Refresh>
          </Group>
          {GROUPS.map((group) => (
            <Group key={group.title} $w={group.w}>
              <GroupTitle>{group.title}</GroupTitle>
              <GroupBody $pad={group.pad}>
                {group.tools.map((tool) => (
                  <Tool key={tool.icon} $w={tool.w} $tone={tool.tone}>
                    <Icon name={tool.icon} />
                    <span>{tool.label}</span>
                  </Tool>
                ))}
              </GroupBody>
            </Group>
          ))}
          <Collapse aria-label="リボンを折りたたむ">
            <svg width="8" height="5" viewBox="0 0 8 5"><path d="M0 4l4-3 4 3" fill="none" stroke="#222" strokeWidth="1.500" /></svg>
          </Collapse>
        </RibbonBar>

        <Middle>
          <Dock>
            <DockTitle>
              <h2>統計</h2>
              <CloseBox aria-label="閉じる"><CloseIcon /></CloseBox>
            </DockTitle>
            <StatsArea>
              <StatsTable>
                <colgroup><col /><col /></colgroup>
                <thead>
                  <tr><th scope="col">パラメーター</th><th scope="col">バリュー</th></tr>
                </thead>
                <tbody>
                  {STATS.map(([name, value]) =>
                    value === undefined ? (
                      <SectionRow key={name}><th colSpan={2} scope="colgroup">{name}</th></SectionRow>
                    ) : (
                      <tr key={name}><th scope="row">{name}</th><td>{value}</td></tr>
                    )
                  )}
                </tbody>
              </StatsTable>
            </StatsArea>
            <DockTabs $h={23} $indent={3}>
              <DockTab $w={54} $active>{dockIcons.list}統計</DockTab>
              <DockTab $w={58}>{dockIcons.data}データ</DockTab>
              <DockTab $w={70}>{dockIcons.symbol}シンボル</DockTab>
            </DockTabs>
          </Dock>

          <ChartColumn>
            <ChartGrid>
              <Pane>
                <PricePlot />
                <PaneCaption $x={3}>XAUUSD、Daily、セル: 17740、スケール: 100 %</PaneCaption>
              </Pane>
              <PriceAxis>
                {PRICES.map((price) => <li key={price}>{price}</li>)}
                <AxisBadge $top={105} $tone="price">2025.005</AxisBadge>
              </PriceAxis>
              <Pane>
                <MacdPlot />
                <PaneCaption $x={1}>MACD (5, 13, 3, Close)</PaneCaption>
              </Pane>
              <MacdAxis>
                <span>50.7572</span>
                <span>-35.4225</span>
                <AxisBadge $top={65} $tone="macd">3.7543</AxisBadge>
              </MacdAxis>
              <TimeAxis fill="#f4f4f4">
                {DATES.map(([x, label]) => {
                  const at = `${((x - 419) / 1247) * 100}%`;
                  return (
                    <g key={x}>
                      <line x1={at} x2={at} y1="-2" y2="1" stroke="#fff" />
                      <text x={at} y="13" textAnchor="middle" fontWeight={label === "2022" ? 700 : 400}>{label}</text>
                    </g>
                  );
                })}
              </TimeAxis>
            </ChartGrid>
            <ChartFooter>
              <ChartTab $w={111}>
                XAUUSD,Daily
                <svg width="6" height="6" viewBox="0 0 6 6" aria-hidden="true"><path d="M.5.5l5 5m0-5l-5 5" stroke="#777" /></svg>
              </ChartTab>
              <ChartTab $w={59} $idle>利益</ChartTab>
              <CascadeButton aria-label="ウィンドウを重ねる">
                <svg width="18" height="17" viewBox="0 0 18 17">
                  <rect x=".5" y="5.500" width="12" height="11" fill="#fff" stroke="#555" />
                  <rect x="4.500" y=".5" width="13" height="11" fill="#fff" stroke="#555" />
                  <path d="M11 2.500h1m1 0h1m1 0h1" stroke="#555" />
                </svg>
              </CascadeButton>
              <ScrollTrack><i /></ScrollTrack>
              <NavButtons>
                <button aria-label="最初へ">
                  <svg width="9" height="12" viewBox="0 0 9 12"><path d="M1 0v12" stroke="#000080" strokeWidth="2" /><path d="M9 0v12L3 6z" fill="#008000" /></svg>
                </button>
                <button aria-label="前へ">
                  <svg width="9" height="12" viewBox="0 0 9 12"><path d="M7 0v12L1 6z" fill="#008000" /></svg>
                </button>
                <button aria-label="次へ">
                  <svg width="11" height="12" viewBox="0 0 11 12"><path d="M4 0v12l6-6z" fill="#008000" /></svg>
                </button>
                <button aria-label="最後へ">
                  <svg width="9" height="12" viewBox="0 0 9 12"><path d="M8 0v12" stroke="#000080" strokeWidth="2" /><path d="M0 0v12l6-6z" fill="#008000" /></svg>
                </button>
              </NavButtons>
              <Toggle $w={23} aria-label="自動スクロール">
                <svg width="18" height="18" viewBox="0 0 18 18">
                  <g fill="#dcecf8" stroke="#2a5fc0">
                    <rect x=".5" y=".5" width="9" height="6" /><rect x="3.500" y="4.500" width="9" height="6" /><rect x="6.500" y="8.500" width="9" height="5" />
                  </g>
                  <path d="M.5 1.500h9M3.500 5.500h9M6.500 9.500h9" stroke="#2a5fc0" strokeWidth="2" />
                  <path d="M0 16h18" stroke="#000" strokeWidth="3" /><path d="M2 16h14" stroke="#fff" strokeDasharray="4 2" />
                </svg>
              </Toggle>
              <Toggle $w={45}>自動ズーム</Toggle>
            </ChartFooter>
          </ChartColumn>
        </Middle>

        <Account>
          <DockTitle>
            <h2>口座履歴</h2>
            <CloseBox aria-label="閉じる"><CloseIcon /></CloseBox>
          </DockTitle>
          <FilterRow>
            <a href="#filter">フィルターを表示</a>
            <span>フィルター適用なし</span>
          </FilterRow>
          <HistoryArea>
            <HistoryTable>
              <colgroup>
                {COLUMNS.map((c) => <col key={c.name} width={c.w} />)}
              </colgroup>
              <thead>
                <tr>
                  {COLUMNS.map((c) => <HeadCell key={c.name} scope="col" $align={c.align}>{c.name}</HeadCell>)}
                </tr>
              </thead>
              <tbody>
                {TRADES.map((trade) => (
                  <tr key={trade.cells[0]}>
                    {trade.cells.map((text, i) => (
                      <Cell key={i} $align={COLUMNS[i].align} $fill={i === trade.hit ? trade.fill : undefined}>
                        {i === 0 ? <Ticket><TicketIcon />{text}</Ticket> : text}
                      </Cell>
                    ))}
                  </tr>
                ))}
              </tbody>
              <tfoot>
                <tr>
                  <Cell colSpan={13} $align="left">利益/損失: 4794.19 (-13541 points)デポジット: 400000.00出金0.00</Cell>
                  <Cell $align="right">0</Cell>
                  <Cell $align="right">404794.19</Cell>
                </tr>
              </tfoot>
            </HistoryTable>
            <HistoryScroll><i /></HistoryScroll>
          </HistoryArea>
          <DockTabs $h={24} $indent={4}>
            <DockTab $w={91}>{dockIcons.pending}指値注文[0]</DockTab>
            <DockTab $w={79} $active>{dockIcons.history}口座履歴</DockTab>
            <DockTab $w={78}>{dockIcons.journal}ジャーナル</DockTab>
            <DockTab $w={66}>{dockIcons.news}ニュース</DockTab>
            <DockTab $w={58}>{dockIcons.note}ノート</DockTab>
          </DockTabs>
        </Account>

        <StatusBar>
          <StatusCell $w={204}>2024.02.05 23:59 (月曜日)</StatusCell>
          <StatusCell $w={124} />
          <StatusCell $w={104} />
          <StatusCell $w={104} />
          <StatusCell $w={104} />
          <StatusCell $w={104} />
          <StatusCell $w={86} />
        </StatusBar>

        <NaviPill>
          <svg width="32" height="34" viewBox="0 0 32 34" aria-hidden="true">
            <circle cx="13" cy="13" r="11.500" fill="none" stroke="#fff" strokeWidth="3" />
            <path d="M8 12v7M13 9v8M18 6v8" stroke="#fff" strokeWidth="3" />
            <path d="M20 22l10 10" stroke="#fff" strokeWidth="5" />
            <path d="M19 21l5 5" stroke="#f3c63f" strokeWidth="5" />
          </svg>
          <span>ForexTester ナビ</span>
        </NaviPill>
      </Frame>
    </>
  );
}
